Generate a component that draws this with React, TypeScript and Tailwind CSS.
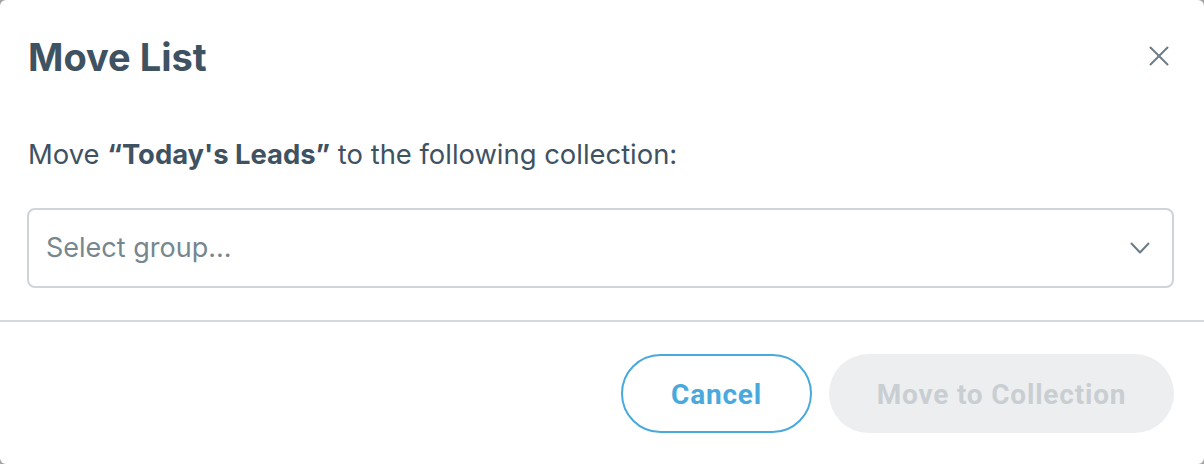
import React from "react";

export default function App() {
  return (
    <div className="w-[1204px] h-[464px] bg-[#a3a3a3]">
      <div
        className="w-full h-full bg-white rounded-[6px] flex flex-col"
        style={{ fontFamily: "Inter, 'Noto Sans', sans-serif" }}
      >
        <div className="flex items-start justify-between pl-[28px] pr-[35px] pt-[34px]">
          <h1 className="text-[38px] leading-[46px] font-bold text-[#3e5262]">
            Move List
          </h1>
          <svg
            className="mt-[12px]"
            width="20"
            height="20"
            viewBox="0 0 20 20"
            fill="none"
            stroke="#6c7c86"
            strokeWidth="2"
            strokeLinecap="round"
          >
            <line x1="1.5" y1="1.5" x2="18.5" y2="18.5" />
            <line x1="18.5" y1="1.5" x2="1.5" y2="18.5" />
          </svg>
        </div>
        <p className="mt-[57px] pl-[28px] text-[27.4px] leading-[34px] text-[#3e5262]">
          Move <span className="font-bold">“Today's Leads”</span> to the following collection:
        </p>
        <div className="mt-[37px] ml-[27px] mr-[30px] h-[80px] border-2 border-[#cfd4d8] rounded-[8px] flex items-center justify-between pl-[17px] pr-[22px]">
          <span className="text-[27px] text-[#76878f]">Select group...</span>
          <svg
            width="20"
            height="13"
            viewBox="0 0 20 13"
            fill="none"
            stroke="#6c7c86"
            strokeWidth="2"
            strokeLinecap="round"
            strokeLinejoin="round"
          >
            <polyline points="1.5,1.5 10,10.5 18.5,1.5" />
          </svg>
        </div>
        <div className="mt-[32px] h-[2px] bg-[#d6d9dc]" />
        <div
          className="mt-[32px] flex justify-end gap-[17px] pr-[30px]"
          style={{ fontFamily: "Roboto, 'Liberation Sans', sans-serif" }}
        >
          <button className="w-[191px] h-[79px] pt-[3px] rounded-full border-2 border-[#4aa9dc] text-[#4aa9dc] text-[28px] tracking-[0.8px] font-bold bg-white">
            Cancel
          </button>
          <button className="w-[345px] h-[79px] pt-[3px] rounded-full bg-[#edeef0] text-[#c9ced2] text-[28px] tracking-[0.8px] font-bold">
            Move to Collection
          </button>
        </div>
      </div>
    </div>
  );
}
